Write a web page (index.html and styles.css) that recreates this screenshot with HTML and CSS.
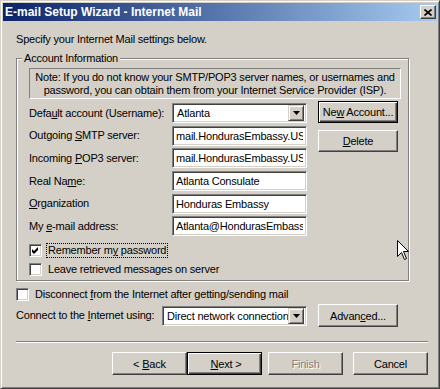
FILE: index.html
```html
<!DOCTYPE html>
<html lang="en">
<head>
    <meta charset="UTF-8">
    <title>E-mail Setup Wizard - Internet Mail</title>
    <link rel="stylesheet" href="styles.css">
</head>
<body>
    <div class="window">
        <div class="titlebar">
            <span class="title">E-mail Setup Wizard - Internet Mail</span>
            <span class="close-btn">
                <svg width="8" height="7" viewBox="0 0 8 7"><path d="M0.5 0.5 L7.5 6.5 M7.5 0.5 L0.5 6.5" stroke="#000" stroke-width="1.6"/></svg>
            </span>
        </div>

        <div class="dialog">
            <p class="intro">Specify your Internet Mail settings below.</p>

            <fieldset class="group">
                <legend>Account Information</legend>
                <div class="note">Note: If you do not know your SMTP/POP3 server names, or usernames and<br>password, you can obtain them from your Internet Service Provider (ISP).</div>

                <div class="account">
                    <div class="fields">
                        <label>Defa<u>u</u>lt account (Username):</label>
                        <div class="combo">
                            <span class="combo-text">Atlanta</span>
                            <span class="combo-arrow"><svg width="7" height="4" viewBox="0 0 7 4"><polygon points="0,0 7,0 3.5,4" fill="#000"/></svg></span>
                        </div>
                        <label>Outgoing <u>S</u>MTP server:</label>
                        <input class="field" type="text" value="mail.HondurasEmbassy.US" readonly>
                        <label>Incoming <u>P</u>OP3 server:</label>
                        <input class="field" type="text" value="mail.HondurasEmbassy.US" readonly>
                        <label>Real Na<u>m</u>e:</label>
                        <input class="field" type="text" value="Atlanta Consulate" readonly>
                        <label><u>O</u>rganization</label>
                        <input class="field" type="text" value="Honduras Embassy" readonly>
                        <label>My <u>e</u>-mail address:</label>
                        <input class="field" type="text" value="Atlanta@HondurasEmbassy.US" readonly>
                    </div>
                    <div class="side-buttons">
                        <button class="btn default">Ne<u>w</u> Account...</button>
                        <button class="btn"><u>D</u>elete</button>
                    </div>
                </div>

                <div class="check-row first">
                    <span class="checkbox">
                        <svg width="7" height="7" viewBox="0 0 7 7"><polygon points="0,2 2,4 6,0 6,3 2,7 0,5" fill="#000"/></svg>
                    </span>
                    <span class="check-label focused">Remember m<u>y</u> password</span>
                </div>
                <div class="check-row">
                    <span class="checkbox"></span>
                    <span class="check-label">Leave retrieved messages on server</span>
                </div>
            </fieldset>

            <div class="check-row disconnect">
                <span class="checkbox"></span>
                <span class="check-label">Disconnect <u>f</u>rom the Internet after getting/sending mail</span>
            </div>

            <div class="connect-row">
                <label>Connect to the <u>I</u>nternet using:</label>
                <div class="combo wide">
                    <span class="combo-text">Direct network connection</span>
                    <span class="combo-arrow"><svg width="7" height="4" viewBox="0 0 7 4"><polygon points="0,0 7,0 3.5,4" fill="#000"/></svg></span>
                </div>
                <button class="btn">Advan<u>c</u>ed...</button>
            </div>

            <div class="separator"></div>

            <div class="nav-buttons">
                <button class="btn nav">&lt; <u>B</u>ack</button>
                <button class="btn nav default">&nbsp;<u>N</u>ext &gt;</button>
                <button class="btn nav disabled">Finish</button>
                <button class="btn nav cancel">Cancel</button>
            </div>
        </div>

        <!-- mouse pointer sitting over the dialog -->
        <svg class="cursor" width="13" height="21" viewBox="0 0 13 21">
            <path d="M0.5 0.5 L0.5 16.5 L4.5 12.5 L7.5 19.5 L9.5 18.5 L6.5 11.5 L11.5 11.5 Z" fill="#fff" stroke="#000" stroke-width="1"/>
        </svg>
    </div>
</body>
</html>
```

FILE: styles.css
```css
* {
    box-sizing: border-box;
}
body {
    margin: 0;
    background-color: #d4d0c8;
    font-family: "Liberation Sans", Arial, sans-serif;
    font-size: 11px;
    letter-spacing: -0.2px;
    color: #000;
}
.window {
    position: relative;
    width: 440px;
    height: 389px;
    padding: 2px;
    background-color: #d4d0c8;
    border: 1px solid;
    border-color: #d4d0c8 #404040 #404040 #d4d0c8;
    box-shadow: inset 1px 1px #fff, inset -1px -1px #808080;
}
.titlebar {
    display: flex;
    align-items: center;
    height: 18px;
    padding: 0 1px 0 2px;
    background: linear-gradient(to right, #0a246a, #a6caf0);
}
.title {
    color: #fff;
    font-weight: bold;
    font-size: 12px;
    letter-spacing: 0;
}
.close-btn {
    margin-left: auto;
    width: 16px;
    height: 14px;
    display: flex;
    align-items: center;
    justify-content: center;
    background-color: #d4d0c8;
    border: 1px solid;
    border-color: #fff #404040 #404040 #fff;
    box-shadow: inset -1px -1px #808080;
}
.dialog {
    padding: 12px 9px 0 13px;
}
.intro {
    margin: 0;
    line-height: 13px;
}
label {
    line-height: 13px;
    white-space: nowrap;
}
u {
    text-decoration-thickness: 1px;
    text-underline-offset: 1px;
}

/* group box */
.group {
    width: 393px;
    margin: 6px 0 0 0;
    padding: 3px 7px 3px 12px;
    border: 1px solid #808080;
    box-shadow: inset 1px 1px #fff, 1px 1px #fff;
}
.group legend {
    margin-left: -7px;
    padding: 0 2px;
    line-height: 13px;
    background-color: #d4d0c8;
}
.note {
    padding: 2px 0 1px;
    line-height: 13px;
    text-align: center;
    white-space: nowrap;
    border: 1px solid;
    border-color: #808080 #fff #fff #808080;
}
.account {
    display: flex;
    margin-top: 4px;
}
.fields {
    display: grid;
    grid-template-columns: 143px 135px;
    grid-auto-rows: 20px;
    row-gap: 2.7px;
    align-items: center;
}

/* sunken controls */
.field, .combo {
    height: 20px;
    background-color: #fff;
    border: 1px solid;
    border-color: #808080 #fff #fff #808080;
    box-shadow: inset 1px 1px #404040, inset -1px -1px #d4d0c8;
}
.field {
    width: 135px;
    padding: 0 3px;
    font: inherit;
    letter-spacing: inherit;
    color: #000;
    outline: none;
}
.combo {
    display: flex;
    align-items: center;
    padding: 2px;
    overflow: hidden;
}
.combo.wide {
    width: 145px;
}
.combo-text {
    flex: 1;
    padding-left: 2px;
    white-space: nowrap;
    overflow: hidden;
}
.combo-arrow {
    flex: none;
    width: 16px;
    height: 16px;
    display: flex;
    align-items: center;
    justify-content: center;
    background-color: #d4d0c8;
    border: 1px solid;
    border-color: #d4d0c8 #404040 #404040 #d4d0c8;
    box-shadow: inset 1px 1px #fff, inset -1px -1px #808080;
}

/* raised buttons */
.btn {
    width: 80px;
    height: 23px;
    padding: 0;
    font: inherit;
    letter-spacing: inherit;
    color: #000;
    background-color: #d4d0c8;
    border: 1px solid;
    border-color: #fff #404040 #404040 #fff;
    box-shadow: inset -1px -1px #808080;
}
.btn.default {
    border-color: #000;
    box-shadow: inset 1px 1px #fff, inset -1px -1px #404040, inset -2px -2px #808080;
}
.btn.disabled {
    color: #808080;
    text-shadow: 1px 1px #fff;
}
.side-buttons {
    display: flex;
    flex-direction: column;
    gap: 7px;
    margin: -2px 0 0 11px;
}
.side-buttons .btn {
    height: 22px;
}

/* checkboxes */
.check-row {
    display: flex;
    align-items: center;
    height: 15px;
    margin-top: 4px;
}
.check-row.first {
    margin-top: 7px;
}
.checkbox {
    width: 13px;
    height: 13px;
    display: flex;
    align-items: center;
    justify-content: center;
    background-color: #fff;
    border: 1px solid;
    border-color: #808080 #fff #fff #808080;
    box-shadow: inset 1px 1px #404040, inset -1px -1px #d4d0c8;
}
.check-label {
    margin-left: 4px;
    padding: 0 1px;
    line-height: 13px;
    border: 1px dotted transparent;
}
.check-label.focused {
    border-color: #000;
}
.disconnect {
    margin-top: 6px;
}

.connect-row {
    display: flex;
    align-items: center;
    margin-top: 2px;
}
.connect-row label {
    width: 146px;
}
.connect-row .btn {
    margin-left: 11px;
}

.separator {
    height: 2px;
    margin-top: 14px;
    border-top: 1px solid #808080;
    border-bottom: 1px solid #fff;
}
.nav-buttons {
    display: flex;
    justify-content: flex-end;
    margin-top: 9px;
}
.btn.nav {
    width: 75px;
}
.btn.disabled {
    margin-left: 6px;
}
.btn.cancel {
    margin-left: 10px;
}

.cursor {
    position: absolute;
    left: 396px;
    top: 239px;
}
```
